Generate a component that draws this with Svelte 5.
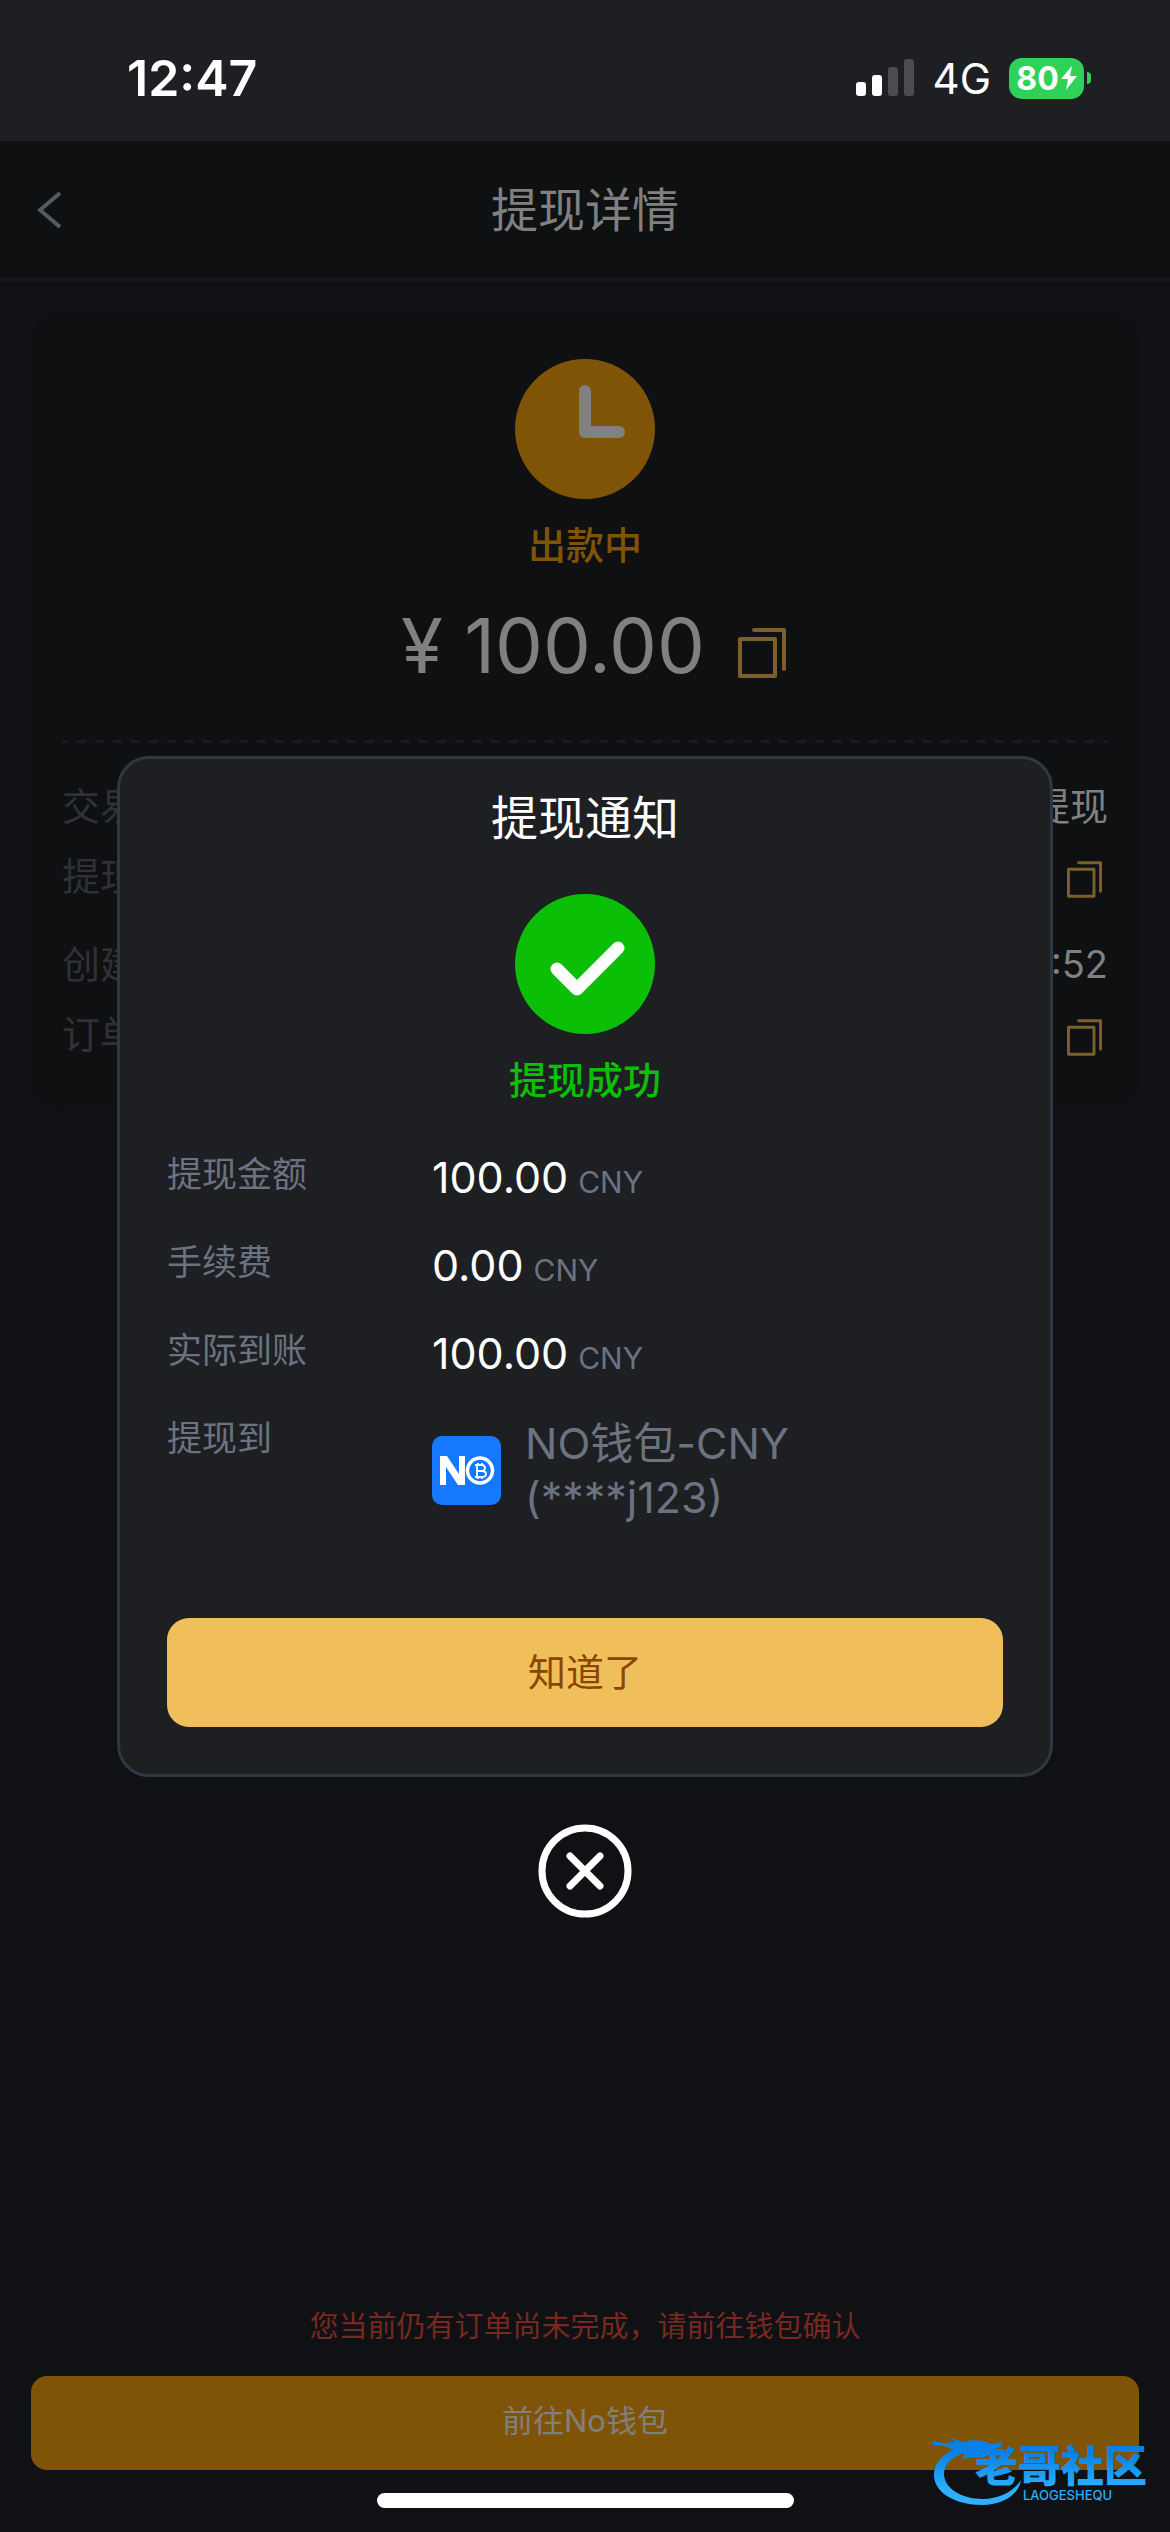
<script>
  const order = [
    { label: '交易类型', value: '提现', copy: false, gap: false },
    { label: '提现单号', value: '', copy: true, gap: false },
    { label: '创建时间', value: '12:46:52', copy: false, gap: true },
    { label: '订单编号', value: '', copy: true, gap: false }
  ];
  const amounts = [
    { label: '提现金额', value: '100.00' },
    { label: '手续费', value: '0.00' },
    { label: '实际到账', value: '100.00' }
  ];
</script>

{#snippet copyIcon()}
  <svg class="copy-icon" viewBox="0 0 48 50" fill="none" stroke="currentColor" stroke-width="4" stroke-linejoin="round" stroke-linecap="round" aria-hidden="true">
    <rect x="2" y="11" width="35" height="37" />
    <path d="M16 2h30v39" />
  </svg>
{/snippet}

<div class="screen">
  <div class="status">
    <time>12:47</time>
    <div class="indicators">
      <svg class="signal" viewBox="0 0 60 38" aria-hidden="true">
        <rect x="0" y="23" width="10" height="14" rx="3" fill="#fff" />
        <rect x="16" y="16" width="10" height="21" rx="3" fill="#fff" />
        <rect x="32" y="8" width="10" height="29" rx="3" fill="#4b4c4f" />
        <rect x="48" y="0" width="10" height="37" rx="3" fill="#4b4c4f" />
      </svg>
      <span class="network">4G</span>
      <div class="battery">
        <span>80</span>
        <svg viewBox="0 0 16 24" aria-hidden="true"><path d="M11 0 0 13h7L5 24 16 10H9z" fill="#fff" /></svg>
      </div>
      <i class="nub"></i>
    </div>
  </div>

  <header>
    <button class="back" aria-label="返回">
      <svg viewBox="0 0 24 38" fill="none" stroke="#555a61" stroke-width="4"><path d="M23 2 3 19l20 17" /></svg>
    </button>
    <h1>提现详情</h1>
  </header>

  <main>
    <section class="card">
      <svg class="badge" viewBox="0 0 140 140" aria-hidden="true">
        <circle cx="70" cy="70" r="70" fill="#805406" />
        <path d="M70 32v41h34" fill="none" stroke="#808080" stroke-width="12" stroke-linecap="round" stroke-linejoin="round" />
      </svg>
      <p class="state pending">出款中</p>
      <div class="total">
        <span>¥ 100.00</span>
        <button class="copy large" aria-label="复制金额">{@render copyIcon()}</button>
      </div>
      <div class="dashes"></div>
      <dl class="order">
        {#each order as row}
          <div class:gap={row.gap}>
            <dt>{row.label}</dt>
            <dd>
              {row.value}
              {#if row.copy}<button class="copy" aria-label="复制{row.label}">{@render copyIcon()}</button>{/if}
            </dd>
          </div>
        {/each}
      </dl>
    </section>
  </main>

  <footer>
    <p>您当前仍有订单尚未完成，请前往钱包确认</p>
    <button class="go">前往No钱包</button>
    <div class="home"></div>
  </footer>

  <div class="overlay">
    <div class="dialog" role="dialog" aria-modal="true" aria-labelledby="dialog-title">
      <h2 id="dialog-title">提现通知</h2>
      <svg class="badge" viewBox="0 0 140 140" aria-hidden="true">
        <circle cx="70" cy="70" r="70" fill="#0abf05" />
        <path d="M42 75l20 20 41-41" fill="none" stroke="#fff" stroke-width="13" stroke-linecap="round" stroke-linejoin="round" />
      </svg>
      <p class="state success">提现成功</p>
      <dl class="amounts">
        {#each amounts as row}
          <dt>{row.label}</dt>
          <dd>{row.value}<small>CNY</small></dd>
        {/each}
        <dt>提现到</dt>
        <dd class="wallet">
          <svg viewBox="0 0 69 69" aria-hidden="true">
            <rect width="69" height="69" rx="10" fill="#1678ff" />
            <path d="M8 49V20h7l12 18V20h6v29h-7L14 31v18z" fill="#fff" />
            <circle cx="48" cy="34.500" r="12.500" fill="none" stroke="#fff" stroke-width="3.500" />
            <path d="M43 29h6q4 0 4 3t-4 3h-4h5q4 0 4 3t-4 3h-7m2-12v12m1-14v2m4-2v2m-4 12v2m4-2v2" fill="none" stroke="#fff" stroke-width="1.800" />
          </svg>
          <span>NO钱包-CNY<br />(****j123)</span>
        </dd>
      </dl>
      <button class="confirm">知道了</button>
    </div>
    <button class="close" aria-label="关闭">
      <svg viewBox="0 0 94 94" fill="none" stroke="#fff" stroke-width="7" stroke-linecap="round">
        <circle cx="47" cy="47" r="43" />
        <path d="M32 32l30 30M62 32 32 62" />
      </svg>
    </button>
  </div>

  <svg class="watermark" viewBox="0 0 232 90" role="img" aria-label="老哥社区">
    <defs>
      <linearGradient id="wm" x1="0" y1="0" x2="0" y2="90" gradientUnits="userSpaceOnUse">
        <stop offset="0.3" stop-color="#0880e6" />
        <stop offset="0.7" stop-color="#2cb0ff" />
      </linearGradient>
    </defs>
    <g fill="url(#wm)">
      <path d="M32 20C14 25 3 36 3 49c0 18 22 30 48 30 20 0 37-10 39-25-7 11-21 19-38 19-22 0-39-11-39-25 0-10 8-17 18-20l12-1 2-9z" />
      <path d="M1 15l12 2 12-1-7-5 14 5 10-2 10 1 9 3 10-2-1 5-9 2 9 1 1 4-6 2-8-1-6 3-9-1-11 2 3-5-11-4-9-4-12-1z" />
      <text class="mark" x="44" y="56">老哥社区</text>
      <text class="latin" x="92" y="74">LAOGESHEQU</text>
    </g>
  </svg>
</div>

<style>
  :global(body) { margin: 0; background: #101115; }
  * { box-sizing: border-box; }
  .screen {
    position: relative;
    min-height: 100vh;
    display: flex;
    flex-direction: column;
    background: #101115;
    color: #fff;
    font-family: Inter, "Noto Sans CJK SC", sans-serif;
  }
  h1, h2, p, dl, dd { margin: 0; font-weight: 400; }
  button { padding: 0; border: 0; background: none; font: inherit; color: inherit; }
  svg { display: block; }

  .status {
    height: 141px;
    flex: none;
    display: flex;
    align-items: center;
    justify-content: space-between;
    padding: 15px 79px 0 127px;
    background: #1e1f22;
  }
  time { font-size: 50px; font-weight: 600; }
  .indicators { display: flex; align-items: center; }
  .signal { width: 60px; height: 38px; }
  .network { margin: 0 18px 0 17px; font-size: 42px; }
  .battery {
    width: 75px;
    height: 41px;
    display: flex;
    align-items: center;
    justify-content: center;
    gap: 2px;
    border-radius: 13px;
    background: #30d158;
    font-size: 32px;
    font-weight: 700;
  }
  .battery svg { width: 16px; height: 24px; }
  .nub { width: 4px; height: 12px; margin-left: 3px; border-radius: 0 4px 4px 0; background: #30d158; }

  header {
    height: 140px;
    flex: none;
    display: grid;
    grid-template-columns: 1fr auto 1fr;
    align-items: center;
    padding: 0 37px;
    background: #0e1011;
    border-bottom: 3px solid #17181c;
  }
  .back svg { width: 24px; height: 38px; }
  h1 { padding-bottom: 6px; font-size: 47px; color: #808080; }

  main { flex: 1; padding: 32px 31px; }
  .card {
    display: flex;
    flex-direction: column;
    align-items: center;
    padding: 46px 31px 42px;
    border-radius: 30px;
    background: #0e1011;
  }
  .badge { width: 140px; height: 140px; }
  .state { font-size: 38px; line-height: 56px; font-weight: 500; }
  .pending { margin-top: 18px; color: #805406; }
  .success { margin-top: 18px; color: #0abf05; }
  .total {
    display: flex;
    align-items: center;
    gap: 33px;
    margin-top: 22px;
    padding-left: 17px;
    font-size: 76px;
    line-height: 100px;
    color: #808080;
  }
  .copy { color: #7b602c; }
  .copy-icon { width: 35px; height: 37px; }
  .large { padding-top: 16px; }
  .large .copy-icon { width: 48px; height: 50px; }
  .dashes {
    align-self: stretch;
    height: 3px;
    margin-top: 45px;
    background: repeating-linear-gradient(90deg, #1a1b20 0 6px, transparent 6px 15px, #1a1b20 15px 18px);
  }
  .order { align-self: stretch; margin-top: 25px; font-size: 38px; color: #808080; }
  .order div { display: flex; justify-content: space-between; height: 70px; align-items: center; }
  .order .gap { margin-top: 18px; }
  .order .gap dd { padding-top: 6px; }
  dt { color: #303136; }
  .order dd { display: flex; align-items: center; }
  .order .copy { margin: 12px 6px 0 0; }

  footer { padding: 0 31px 24px; display: flex; flex-direction: column; align-items: center; }
  footer p { font-size: 29px; line-height: 40px; color: #78281f; }
  .go {
    align-self: stretch;
    height: 94px;
    margin-top: 29px;
    padding-bottom: 10px;
    border-radius: 16px;
    background: #805406;
    color: #808080;
    font-size: 31px;
  }
  .home { width: 417px; height: 15px; margin-top: 23px; border-radius: 8px; background: #fff; }

  .overlay {
    position: absolute;
    inset: 0;
    display: flex;
    flex-direction: column;
    align-items: center;
    padding-top: 756px;
  }
  .dialog {
    width: 80%;
    display: flex;
    flex-direction: column;
    align-items: center;
    padding: 24px 47px 47px;
    border: 3px solid #2f3744;
    border-radius: 32px;
    background: #1e1f22;
  }
  h2 { margin-bottom: 41px; font-size: 47px; line-height: 70px; }
  .amounts {
    align-self: stretch;
    display: grid;
    grid-template-columns: 265px 1fr;
    grid-auto-rows: 88px;
    margin-top: 30px;
    font-size: 43px;
    line-height: 62px;
  }
  .amounts dt { font-size: 35px; line-height: 48px; margin-top: 12px; color: #6b7280; }
  .amounts dd { margin-top: 8px; }
  .amounts small { margin-left: 10px; font-size: 30px; color: #6b7280; }
  .amounts .wallet {
    align-self: start;
    display: flex;
    align-items: center;
    gap: 24px;
    margin-top: 14px;
    color: #6b7280;
    line-height: 54px;
  }
  .wallet svg { width: 69px; height: 69px; }
  .confirm {
    align-self: stretch;
    height: 109px;
    margin-top: 128px;
    padding-bottom: 7px;
    border-radius: 22px;
    background: #f0bf5c;
    color: #8a4600;
    font-size: 38px;
  }
  .close { margin-top: 47px; }
  .close svg { width: 94px; height: 94px; }

  .watermark { position: absolute; right: 7px; bottom: 16px; width: 232px; height: 90px; }
  .mark { font-size: 43px; font-weight: 900; }
  .latin { font-size: 13px; font-weight: 500; }
</style>
